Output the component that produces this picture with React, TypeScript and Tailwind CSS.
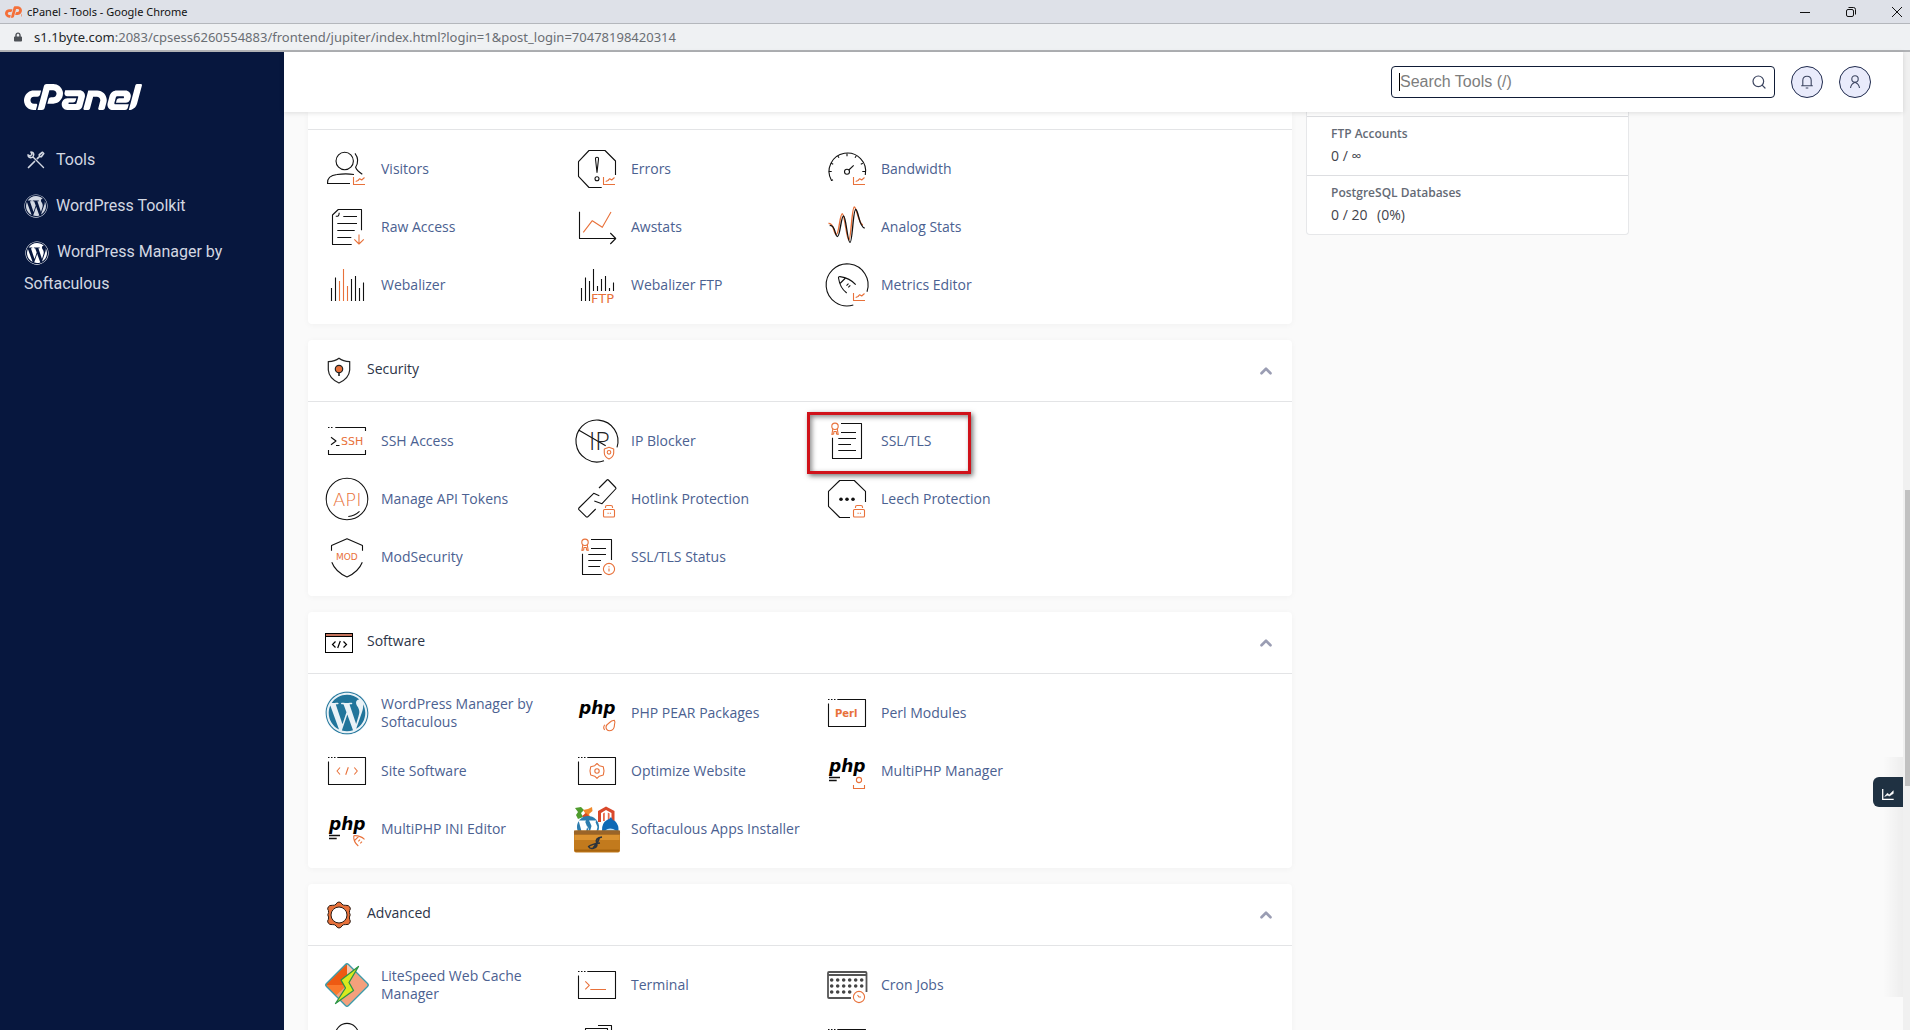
import type { ReactNode } from 'react';
import { ChevronUp, Search } from 'lucide-react';
import { FaCpanel, FaLock, FaWordpress } from 'react-icons/fa';

const ORANGE = '#e8713a';

function Icon({ children }: { children: ReactNode }) {
  return (
    <svg className="w-12 h-12 shrink-0" viewBox="0 0 48 48" fill="none" stroke="#111111" strokeWidth="1.1" strokeLinejoin="round" aria-hidden="true">
      {children}
    </svg>
  );
}

// Small orange marks that sit in the lower right corner of an icon
const ChartBadge = () => (
  <path stroke={ORANGE} d="M30.5 32V39.5H42M32.7 36.5 35 35.5 36.7 33.7 38.7 35 41.5 32.5" />
);

const LockBadge = () => (
  <g stroke={ORANGE}>
    <rect x="30.5" y="34.5" width="11" height="7.5" rx="1" />
    <path d="M32.5 33V32Q32.5 30.5 34 30.5H38Q39.5 30.5 39.5 32V33M34.5 38.3H35.7M36.8 38.3H38" />
  </g>
);

const Window = () => (
  <path d="M5.5 14.5V37.5H42.5V10.5H14.3M5 10.5H6.5M8 10.5H9.5M11 10.5H12.5" />
);

const Ribbon = () => (
  <g stroke={ORANGE}>
    <circle cx="12" cy="9.3" r="3.2" />
    <path d="M9.8 12 8.9 17.5 10.7 17 10.9 14.5H13.3L13.5 17 15.2 17.5 14.3 12" />
  </g>
);

const PhpText = () => (
  <text x="6" y="25" fill="#000000" stroke="none" className="font-['DejaVu_Sans',sans-serif] text-[17px] font-bold italic">
    php
  </text>
);

const PhpLines = () => <path d="M6 30.5H17M6 33.5H13.7" strokeWidth="1.3" />;

const icons: Record<string, ReactNode> = {
  visitors: (
    <Icon>
      <circle cx="21.7" cy="16" r="8.7" />
      <path d="M32 8.3Q37 15 32.6 22.3Q34 26 39.3 29.3M27 38.5H4.5Q4 30.5 14 29.5Q23 28.3 31 29.5" />
      <ChartBadge />
    </Icon>
  ),
  errors: (
    <Icon>
      <path d="M42.5 30V16L32 5.5H16L5.5 16.7V31.3L16 42.5H28.7" />
      <path d="M24 27.5 22.5 14Q22.4 12.3 24 12.3T25.5 14Z" />
      <circle cx="24" cy="33.7" r="2" />
      <ChartBadge />
    </Icon>
  ),
  bandwidth: (
    <Icon>
      <path d="M10 34.7 8.5 35.5A18.3 18.3 0 1 1 42.3 30" />
      <path d="M5.8 26.5H8.7M8.2 18.2 10.2 19.2M14.8 11 16 12.8M24 8.5V11.2M33.2 11 32 12.8M39.8 18.2 37.8 19.2M42.2 26.5H39.3" />
      <circle cx="24" cy="26.7" r="2.5" />
      <path d="M25.8 25 30.7 20.3" />
      <ChartBadge />
    </Icon>
  ),
  rawAccess: (
    <Icon>
      <path d="M38.5 27.3V6.5H15.3L9.5 12V41.5H28.7M12.8 13.3H14.5Q16 13.3 16.2 9.7" />
      <path d="M20.3 13.5H34M14.3 20.5H34M14.3 27.5H31.7M14.3 34.5H28.3" />
      <path stroke={ORANGE} d="M36 31.5V41M31.3 36.3 36 41 40.8 36.3" />
    </Icon>
  ),
  awstats: (
    <Icon>
      <path d="M6.5 8.7V35.5H42.5M37.3 30 42.7 35.5 37.3 41" />
      <path stroke={ORANGE} d="M10.3 29.3 19.3 17.7 29.3 24.3 38 9" />
    </Icon>
  ),
  analog: (
    <Icon>
      <path stroke={ORANGE} strokeWidth="1.4" d="M5.5 20.5C11 19 10.5 31.5 13.3 31.5S16.8 10.7 19.3 10.7S23.5 37 25.8 37S28.8 4 31.3 4S35.5 21.5 40 22" />
      <path strokeWidth="1.3" d="M6.7 22.5C12.5 21.5 11.8 33.5 14.5 33.5S18 13 20.5 13S24.5 39.5 27 39.5S30 6.5 32.7 6.5S36 25 41.7 25" />
    </Icon>
  ),
  webalizer: (
    <Icon>
      <path d="M8.5 27V40M12.5 16.5V40M28.5 18V40M32.5 15V40M36.5 27V40M40.5 21.5V40" />
      <path stroke={ORANGE} d="M16.5 20V40M20.5 8V40M24.5 25V40" />
    </Icon>
  ),
  webalizerFtp: (
    <Icon>
      <path d="M8.5 27V40M12.5 16.5V40M16.5 20V40M20.5 8V30M24.5 25V30M28.5 18V30M32.5 15V30M36.5 27V30M40.5 21.5V30" />
      <text x="18" y="42" fill={ORANGE} stroke="none" className="font-['DejaVu_Sans',sans-serif] text-[13px]">FTP</text>
    </Icon>
  ),
  metricsEditor: (
    <Icon>
      <path d="M44 30.7A21 21 0 1 0 30.3 44" />
      <path d="M23.7 32Q17 27 15.5 17Q15.3 15.5 17 15.6Q27 17 32.7 23.7M22.5 17 17 22.5M23.5 24.7 25.5 22.7M25.3 26.3 27.3 24.3" />
      <ChartBadge />
    </Icon>
  ),
  ssh: (
    <Icon>
      <path d="M12.3 10.5H42.5V14M5.5 33V37.5H42.5V33M5 10.5H6.5M8 10.5H9.5M8 20.3 13 24 8 27.7M13 28.5H16.5" />
      <text x="18" y="28" fill={ORANGE} stroke="none" className="font-['DejaVu_Sans',sans-serif] text-[11px]">SSH</text>
    </Icon>
  ),
  ipBlocker: (
    <Icon>
      <path d="M44 30.3A21 21 0 1 0 31 43.8M6 13.3 32.7 28.7" />
      <text x="16" y="33" fill="#222222" stroke="none" className="font-['Open_Sans',sans-serif] text-[25px] font-light">IP</text>
      <path stroke={ORANGE} fill="#ffffff" d="M36 30.3 40.7 32V36Q40.5 40 36 42Q31.5 40 31.3 36V32Z" />
      <circle cx="36" cy="35.3" r="1.8" stroke={ORANGE} />
    </Icon>
  ),
  sslTls: (
    <Icon>
      <path d="M18 6.5H38.5V41.5H9.5V20.7M18 15.5H33M15.3 21.5H33M15.3 27.5H28M15.3 33.5H33" />
      <Ribbon />
    </Icon>
  ),
  apiTokens: (
    <Icon>
      <circle cx="24" cy="24" r="20.8" />
      <text x="10" y="31" fill={ORANGE} stroke="none" className="font-['DejaVu_Sans',sans-serif] text-[18px] font-extralight">API</text>
      <path d="M25.3 41.5Q31.5 41 36.5 36.3" />
    </Icon>
  ),
  hotlink: (
    <Icon>
      <path d="M26 13 34 5Q34.7 4.3 35.4 5L42.6 12.5Q43.3 13.3 42.6 14L29 28.7 21.3 26M26.3 20.7 20.7 18.3 5.9 33Q5.3 34 5.9 34.7L13.3 41.8Q14 42.4 14.8 41.8L22.7 34" />
      <LockBadge />
    </Icon>
  ),
  leech: (
    <Icon>
      <path d="M42.5 27V16.3L31.3 5.5H16.7L5.5 16.3V31.3L16.7 42.5H27" />
      <g fill="#111111" stroke="none">
        <circle cx="18" cy="24.2" r="1.8" />
        <circle cx="24" cy="24.2" r="1.8" />
        <circle cx="30" cy="24.2" r="1.8" />
      </g>
      <LockBadge />
    </Icon>
  ),
  modSecurity: (
    <Icon>
      <path d="M8.5 17.7V12.5L24 5.7 39.5 12.5V17.7M8.8 29.3Q12.5 39 24 44Q35.5 39 39.3 29.3" />
      <text x="13" y="27" fill={ORANGE} stroke="none" className="font-['DejaVu_Sans',sans-serif] text-[9px]">MOD</text>
    </Icon>
  ),
  sslStatus: (
    <Icon>
      <path d="M18 6.5H38.5V27M28.7 41.5H9.5V20.7M18 15.5H33M15.3 21.5H33M15.3 27.5H28M15.3 33.5H27" />
      <Ribbon />
      <circle cx="36" cy="36" r="5.6" stroke={ORANGE} />
      <path stroke={ORANGE} d="M36 33.3V34.3M36 35.5V38.5" />
    </Icon>
  ),
  wordpress: (
    <span className="flex w-12 h-12 shrink-0 items-center justify-center">
      <FaWordpress className="w-11 h-11 rounded-full bg-[#e9f2f7] text-[#21759b]" />
    </span>
  ),
  pear: (
    <Icon>
      <PhpText />
      <path stroke={ORANGE} d="M41.3 31.3Q42.5 33 41.5 35.5Q41.5 41.5 36.7 41.7Q33 41.5 33 38Q33.3 35.7 36 34Q38.5 31.5 41.3 31.3ZM31.7 35.7Q29.7 38.7 31.7 41" />
    </Icon>
  ),
  perl: (
    <Icon>
      <Window />
      <text x="12" y="28" fill={ORANGE} stroke="none" className="font-['DejaVu_Sans',sans-serif] text-[10px] font-bold">Perl</text>
    </Icon>
  ),
  siteSoftware: (
    <Icon>
      <Window />
      <path stroke={ORANGE} d="M17 20.5 14 24 17 27.5M25.3 20.3 22.7 27.7M31.3 20.5 34.3 24 31.3 27.5" />
    </Icon>
  ),
  optimize: (
    <Icon>
      <Window />
      <path stroke={ORANGE} d="M24 16.5 26.3 18.7 30.3 19.8 31 23.9 30.3 28 26.3 29.2 24 31.3 21.7 29.2 17.7 28 17 23.9 17.7 19.8 21.7 18.7Z" />
      <circle cx="24" cy="24" r="2.2" stroke={ORANGE} />
    </Icon>
  ),
  phpManager: (
    <Icon>
      <PhpText />
      <PhpLines />
      <circle cx="36" cy="33" r="2.6" stroke={ORANGE} />
      <path stroke={ORANGE} d="M30.5 38V41.5H41.5V38" />
    </Icon>
  ),
  phpIni: (
    <Icon>
      <PhpText />
      <PhpLines />
      <path stroke={ORANGE} d="M41.5 34.3Q37 30.3 30.8 30.7Q30.2 36.7 35.3 41M36.3 30.8 31 36M35.3 36.3 37 34.7M37.3 38.3 39 36.7" />
    </Icon>
  ),
  softaculous: (
    <Icon>
      <g stroke="none">
        <path fill="#4f9c2d" d="M2 3 8 2 11 5 8 8 10 12 5 14 3 10 5 7Z" />
        <path fill="#f08a2c" d="M10 5 15 4 19 2 19.5 6 16 9 17 12 10 12 12 8Z" />
        <path fill="#d84a26" d="M9 11 13 8 17 12 13 15Z" />
        <path fill="#d9482b" d="M25 6 33 1.5 41.5 6V17H38.5V8L33 5 28 8V17H25Z" />
        <path fill="#e8694b" d="M30 8.5 31.8 7.5V16H30ZM34.8 7.5 36.6 8.5V16H34.8Z" />
        <circle cx="15" cy="22" r="11" fill="#2b7cae" />
        <path fill="#ffffff" d="M5 15.5H13L12.3 17 16.5 28 18.5 21 16.8 17 16 15.5H23.5L22.5 17 24.5 22 22.5 30H18L14.5 21 12 30H9.5L6 17Z" />
        <path fill="#0f69b5" d="M38 12Q39 15 42 16Q46 20 45.5 26H29Q28.5 18 34 15Q37 14 38 12Z" />
        <path fill="#bfe0f6" d="M32 25.5Q37 21.5 43 25.5Z" />
        <rect x="1" y="25.5" width="46" height="22" rx="2" fill="#c27a1d" />
        <rect x="1" y="25.5" width="46" height="4" fill="#9a6428" />
        <rect x="1.5" y="30" width="45" height="5" fill="#db9230" />
        <rect x="2" y="44.5" width="44" height="2" fill="#a7640f" />
      </g>
      <path stroke="#2b333c" strokeWidth="1.5" d="M29 32Q22 33 23.5 37.5T21 43Q17 44.5 15.5 41.5Q19 39 27 38M26.5 32.5Q25 38 20 43" />
    </Icon>
  ),
  litespeed: (
    <Icon>
      <path fill="#f4a07c" stroke="none" d="M24 2.5 45.5 24 24 45.5 2.5 24Z" />
      <path fill="#ee5a12" stroke="none" d="M24 2.5V24H2.5Z" />
      <path fill="#fb7a2c" stroke="none" d="M2.5 24H24L13 34.5Z" />
      <path fill="#f6c3ac" stroke="none" d="M24 2.5 31 9.5 24 18Z" />
      <path fill="none" stroke="#3c9aa8" strokeWidth="1.4" d="M22.5 3.5Q24 2 25.5 3.5L44.5 22.5Q46 24 44.5 25.5L25.5 44.5Q24 46 22.5 44.5L3.5 25.5Q2 24 3.5 22.5Z" />
      <path fill="#d9ea1e" stroke="#2c9448" strokeWidth="1.3" d="M35.5 5.5 18 19 22.5 27 12.5 42.5 30.5 29.5 26 21.5Z" />
    </Icon>
  ),
  terminal: (
    <Icon>
      <Window />
      <path stroke={ORANGE} d="M12.3 20.3 16.3 24.3 12.3 28.3M17.3 28.5H33" />
    </Icon>
  ),
  cron: (
    <Icon>
      <path stroke="#555555" strokeWidth="1.8" d="M28 37H6Q5 37 5 36V12Q5 11 6 11H42.5Q43.5 11 43.5 12V31M5 14H43.5" />
      <path stroke="#444444" strokeWidth="3.6" strokeLinecap="round" strokeDasharray="0 6" d="M8.7 19H39M8.7 25H39M8.7 31H27" />
      <circle cx="36" cy="36" r="5.6" stroke={ORANGE} />
      <path stroke={ORANGE} d="M34.5 34 36 36H38" />
    </Icon>
  ),
  trackDns: (
    <Icon>
      <circle cx="24" cy="16" r="11.6" />
      <path d="M24 28V42" />
    </Icon>
  ),
  indexes: (
    <Icon>
      <path d="M12.5 40V9.5H34.5V40ZM25 6.5H38.5V36" />
    </Icon>
  ),
  errorPages: (
    <Icon>
      <Window />
    </Icon>
  ),
};

type Tool = { icon: string; label: string; clipped?: boolean; highlighted?: boolean };

const metrics: Tool[] = [
  { icon: 'visitors', label: 'Visitors' },
  { icon: 'errors', label: 'Errors' },
  { icon: 'bandwidth', label: 'Bandwidth' },
  { icon: 'rawAccess', label: 'Raw Access' },
  { icon: 'awstats', label: 'Awstats' },
  { icon: 'analog', label: 'Analog Stats' },
  { icon: 'webalizer', label: 'Webalizer' },
  { icon: 'webalizerFtp', label: 'Webalizer FTP' },
  { icon: 'metricsEditor', label: 'Metrics Editor' },
];

const security: Tool[] = [
  { icon: 'ssh', label: 'SSH Access' },
  { icon: 'ipBlocker', label: 'IP Blocker' },
  { icon: 'sslTls', label: 'SSL/TLS', highlighted: true },
  { icon: 'apiTokens', label: 'Manage API Tokens' },
  { icon: 'hotlink', label: 'Hotlink Protection' },
  { icon: 'leech', label: 'Leech Protection' },
  { icon: 'modSecurity', label: 'ModSecurity' },
  { icon: 'sslStatus', label: 'SSL/TLS Status' },
];

const software: Tool[] = [
  { icon: 'wordpress', label: 'WordPress Manager by Softaculous' },
  { icon: 'pear', label: 'PHP PEAR Packages' },
  { icon: 'perl', label: 'Perl Modules' },
  { icon: 'siteSoftware', label: 'Site Software' },
  { icon: 'optimize', label: 'Optimize Website' },
  { icon: 'phpManager', label: 'MultiPHP Manager' },
  { icon: 'phpIni', label: 'MultiPHP INI Editor' },
  { icon: 'softaculous', label: 'Softaculous Apps Installer' },
];

const advanced: Tool[] = [
  { icon: 'litespeed', label: 'LiteSpeed Web Cache Manager' },
  { icon: 'terminal', label: 'Terminal' },
  { icon: 'cron', label: 'Cron Jobs' },
  { icon: 'trackDns', label: 'Track DNS', clipped: true },
  { icon: 'indexes', label: 'Indexes', clipped: true },
  { icon: 'errorPages', label: 'Error Pages', clipped: true },
];

const SecurityIcon = () => (
  <svg className="w-7 h-7" viewBox="0 0 28 28" fill="none" stroke="#222222" strokeWidth="1.2" aria-hidden="true">
    <path d="M14 1.3Q18 4.3 24.7 4.7V13Q24 21.5 14 26Q4 21.5 3.3 13V4.7Q10 4.3 14 1.3Z" />
    <path d="M14 15V19" strokeWidth="1.6" />
    <circle cx="14" cy="12" r="3.7" fill={ORANGE} />
  </svg>
);

const SoftwareIcon = () => (
  <svg className="w-7 h-7" viewBox="0 0 28 28" fill="none" stroke="#000000" aria-hidden="true">
    <rect x="0.5" y="4.5" width="27" height="3" fill="#c4735c" />
    <rect x="0.5" y="4.5" width="27" height="19" />
    <path strokeWidth="1.2" d="M10.5 12.5 7.5 15.5 10.5 18.5M15.3 12 12.7 19M18.5 12.5 21.5 15.5 18.5 18.5" />
  </svg>
);

const AdvancedIcon = () => (
  <svg className="w-7 h-7" viewBox="0 0 28 28" stroke="#2b1a12" aria-hidden="true">
    <path
      fill={ORANGE}
      d="M11 3.2Q12 1 14 1T17 3.2Q18.5 4.7 20.7 4.3Q23.5 4 24.8 6T24.6 9.5Q24 11.5 25.2 13.9Q24 16 24.6 18.3Q26 20 24.8 22T20.7 23.6Q18.5 23.2 17 24.8Q16 27 14 27T11 24.8Q9.5 23.2 7.3 23.6Q4.5 24 3.2 22T3.4 18.3Q4 16 2.8 13.9Q4 11.5 3.4 9.5Q2 8 3.2 6T7.3 4.3Q9.5 4.7 11 3.2Z"
    />
    <circle cx="14" cy="14" r="8" fill="#ffffff" />
  </svg>
);

function ToolGrid({ tools }: { tools: Tool[] }) {
  return (
    <div className="grid grid-cols-[repeat(auto-fill,250px)] py-2.5 pl-[15px]">
      {tools.map((tool) => (
        <a key={tool.icon} href="#" aria-label={tool.label} className="relative flex h-[58px] items-center gap-2.5 pr-4">
          {icons[tool.icon]}
          {!tool.clipped && <span className="text-sm leading-[18px] text-[#4b6191]">{tool.label}</span>}
          {tool.highlighted && (
            <span className="absolute -left-4 top-0 h-[62px] w-[164px] border-3 border-[#d0121a] shadow-[2px_2px_5px_rgba(0,0,0,0.55),inset_2px_2px_5px_rgba(0,0,0,0.45)]" />
          )}
        </a>
      ))}
    </div>
  );
}

function ToolSection({ title, icon, tools }: { title: string; icon: ReactNode; tools: Tool[] }) {
  return (
    <section className="rounded bg-white shadow-[0_1px_6px_rgba(0,0,0,0.04)]">
      <header className="flex h-[62px] items-center border-b border-[#e3e4e6] px-[17px]">
        {icon}
        <h2 className="mb-1 ml-3.5 flex-1 text-sm leading-5 text-[#2c3447]">{title}</h2>
        <button type="button" aria-label={`Collapse ${title}`}>
          <ChevronUp className="w-[18px] h-[18px] text-[#9a9db3]" strokeWidth={3.5} />
        </button>
      </header>
      <ToolGrid tools={tools} />
    </section>
  );
}

function BrowserChrome() {
  return (
    <div className="shrink-0 font-['Noto_Sans',sans-serif]">
      <div className="flex h-6 items-center border-b border-[#b4b7bc] bg-[#dee1e8] pl-[5px]">
        <FaCpanel className="h-3 w-[17px] text-[#f4703a]" viewBox="0 179 212 141" />
        <span className="ml-[5px] flex-1 text-[11px] leading-4 text-[#111111]">cPanel - Tools - Google Chrome</span>
        <div className="flex items-center gap-9 pr-2 text-[#111111]">
          <button type="button" aria-label="Minimize">
            <svg className="w-2.5 h-2.5" viewBox="0 0 10 10" stroke="currentColor">
              <path d="M0 5.5H10" />
            </svg>
          </button>
          <button type="button" aria-label="Restore">
            <svg className="w-2.5 h-2.5" viewBox="0 0 10 10" fill="none" stroke="currentColor">
              <rect x="0.5" y="2.5" width="7" height="7" rx="1.5" />
              <path d="M2.5 0.5H7.5Q9.5 0.5 9.5 2.5V7.5" />
            </svg>
          </button>
          <button type="button" aria-label="Close">
            <svg className="w-2.5 h-2.5" viewBox="0 0 10 10" stroke="currentColor">
              <path d="M0 0 10 10M10 0 0 10" />
            </svg>
          </button>
        </div>
      </div>
      <div className="flex h-7 items-center border-b-2 border-[#b0b2b5] bg-[#eff1f3] pl-3.5">
        <FaLock className="w-2 h-2.5 text-[#4d5156]" />
        <p className="ml-3 text-[13px] leading-5 text-[#6a6e73]">
          <span className="text-[#26282b]">s1.1byte.com</span>
          :2083/cpsess6260554883/frontend/jupiter/index.html?login=1&amp;post_login=70478198420314
        </p>
      </div>
    </div>
  );
}

function Sidebar() {
  return (
    <aside className="w-[284px] shrink-0 bg-[#07173e] px-6 pt-8 font-['Roboto',sans-serif]">
      <FaCpanel className="h-[26px] w-[118px] text-white" viewBox="0 179 640 141" aria-label="cPanel" />
      <nav className="mt-[34px] flex flex-col gap-3.5 text-base leading-8 text-[#d3d8e2]">
        <a href="#" className="flex items-center gap-2">
          <span className="flex w-6 justify-center">
            <svg className="w-[18px] h-[18px]" viewBox="0 0 18 18" fill="none" stroke="currentColor" strokeWidth="1.7" strokeLinecap="round" strokeLinejoin="round">
              <path d="M1.5 16.5 7.5 10.5M10.3 7.7 12.5 5.5M12.5 5.5 12.3 3.7 15.5 1.3 16.7 2.5 14.3 5.7Z" />
              <path d="M16.5 16.5 6 6M1 3.8 3.3 5 5 3.3 3.8 1Q6.5 1 6.8 3.5L6 6 3.5 6.8Q1 6.5 1 3.8Z" strokeWidth="1.4" />
            </svg>
          </span>
          Tools
        </a>
        <a href="#" className="flex items-center gap-2">
          <FaWordpress className="w-6 h-6" />
          WordPress Toolkit
        </a>
        <a href="#">
          <FaWordpress className="ml-px mr-2 inline-block w-6 h-6 text-white" />
          WordPress Manager by Softaculous
        </a>
      </nav>
    </aside>
  );
}

function TopBar() {
  return (
    <header className="relative z-10 flex h-[60px] shrink-0 items-center justify-end gap-4 bg-white pr-8 shadow-[0_1px_5px_rgba(0,0,0,0.12)]">
      <div className="flex h-8 w-96 items-center rounded border border-[#0f1b36] bg-white px-[7px]">
        <span className="h-[18px] w-px bg-black" />
        <input
          type="text"
          aria-label="Search Tools"
          placeholder="Search Tools (/)"
          className="min-w-0 flex-1 bg-transparent font-['Liberation_Sans',sans-serif] text-base leading-5 outline-none placeholder:text-[#7d7d7d]"
        />
        <Search className="w-4 h-4 text-[#3c4560]" strokeWidth={1.8} />
      </div>
      <button type="button" aria-label="Notifications" className="flex h-8 w-8 items-center justify-center rounded-full border border-[#1f2a4d] bg-[#e9ebfb]">
        <svg className="w-4 h-4" viewBox="0 0 16 16" fill="none" stroke="#3c4560" strokeWidth="1.1">
          <path d="M2.2 11.7H13.8M3.8 11.7V6.5Q3.8 2.3 8 2.3T12.2 6.5V11.7M6.7 14H9.3" />
        </svg>
      </button>
      <button type="button" aria-label="Account" className="flex h-8 w-8 items-center justify-center rounded-full border border-[#1f2a4d] bg-[#e9ebfb]">
        <svg className="w-4 h-4" viewBox="0 0 16 16" fill="none" stroke="#3c4560" strokeWidth="1.1">
          <circle cx="8" cy="5" r="3.2" />
          <path d="M3.5 14Q4 10 8 8.3Q12 10 12.5 14" />
        </svg>
      </button>
    </header>
  );
}

function StatRow({ label, children }: { label: string; children: ReactNode }) {
  return (
    <div className="border-t border-[#dddee1] px-6 pt-1.5 pb-2">
      <dt className="text-xs leading-[22px] font-semibold text-[#646a75]">{label}</dt>
      <dd className="text-sm leading-[22px] text-[#3f434b]">{children}</dd>
    </div>
  );
}

export default function App() {
  return (
    <div className="flex h-screen flex-col overflow-hidden bg-[#fafafa] font-['Open_Sans',sans-serif]">
      <BrowserChrome />
      <div className="relative flex min-h-0 flex-1">
        <Sidebar />
        <div className="flex min-w-0 flex-1 flex-col">
          <TopBar />
          <main className="flex min-h-0 max-w-[1369px] flex-1 items-start gap-3.5 overflow-hidden px-6">
            <div className="flex min-w-0 flex-1 flex-col gap-4">
              <section className="rounded-b bg-white shadow-[0_1px_6px_rgba(0,0,0,0.04)]">
                <div className="h-[18px] border-b border-[#e3e4e6]" />
                <ToolGrid tools={metrics} />
              </section>
              <ToolSection title="Security" icon={<SecurityIcon />} tools={security} />
              <ToolSection title="Software" icon={<SoftwareIcon />} tools={software} />
              <ToolSection title="Advanced" icon={<AdvancedIcon />} tools={advanced} />
            </div>
            <dl className="w-[323px] shrink-0 rounded-b border-x border-b border-[#e6e7e9] bg-white pt-1">
              <StatRow label="FTP Accounts">0 / ∞</StatRow>
              <StatRow label="PostgreSQL Databases">
                0 / 20 <span className="ml-1.5">(0%)</span>
              </StatRow>
            </dl>
          </main>
        </div>
        <div className="flex w-[7px] shrink-0 flex-col items-end bg-[#f0f0f0]">
          <div className="mt-[438px] h-[296px] w-[5px] bg-[#c1c1c1]" />
        </div>
        <div className="absolute right-[7px] top-[705px] h-[240px] w-5 bg-linear-to-l from-black/5 to-transparent" />
        <button type="button" aria-label="Statistics" className="absolute right-[7px] top-[725px] flex h-[30px] w-[30px] items-center justify-center rounded-l-md bg-[#1f3142] pt-1">
          <svg className="w-3 h-3" viewBox="0 0 12 12" fill="none" stroke="#ffffff" strokeWidth="1.3">
            <path d="M0.7 1V11.3H11.7" />
            <path d="M2.7 8.5 5.3 5.3 7.3 6.7 11.3 2.7V5.5L7.5 8 5.3 7.3Z" fill="#ffffff" strokeWidth="0.5" />
          </svg>
        </button>
      </div>
    </div>
  );
}
